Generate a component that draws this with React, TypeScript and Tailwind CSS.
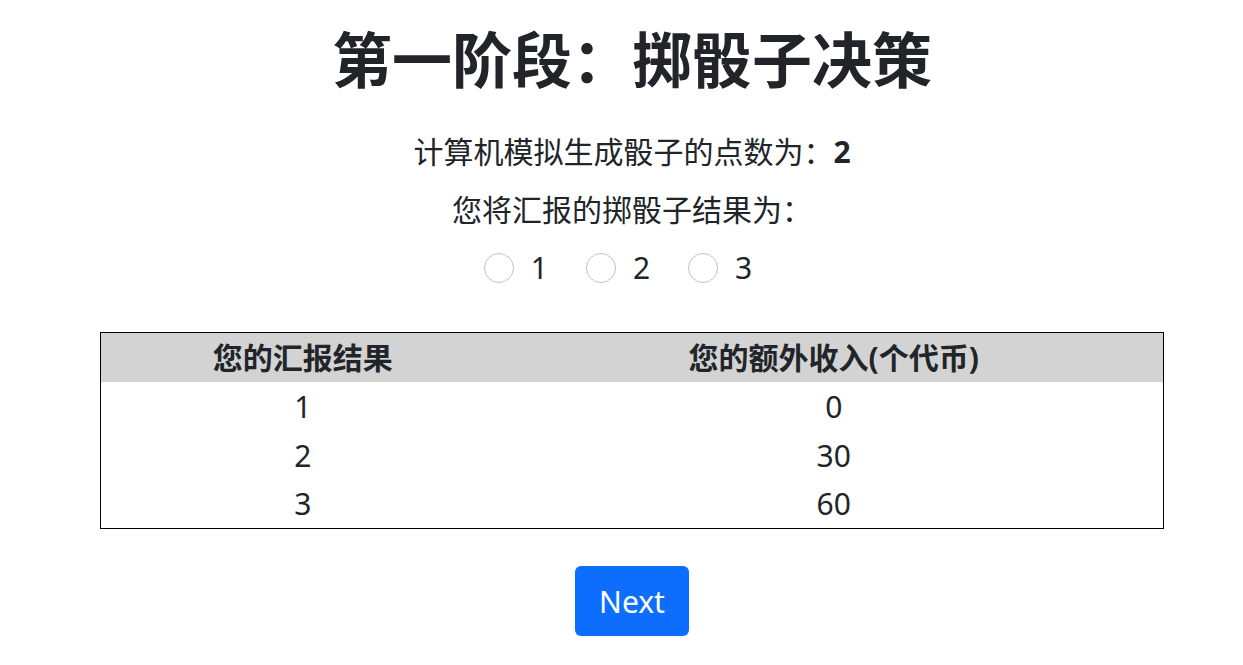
import React from "react";

export default function App() {
  const font = {
    fontFamily: '"Noto Sans", "Noto Sans CJK SC", sans-serif',
  };
  return (
    <div
      className="w-[1243px] h-[665px] bg-white text-[#212529] flex flex-col items-center pt-[24px] pl-[21px]"
      style={font}
    >
      <h1 className="text-[60px] leading-[72px] font-bold m-0">第一阶段：掷骰子决策</h1>
      <p className="text-[30px] leading-[42px] mt-[35px]">
        计算机模拟生成骰子的点数为：<span className="font-bold">2</span>
      </p>
      <p className="text-[30px] leading-[42px] mt-[16px]">您将汇报的掷骰子结果为：</p>
      <div className="flex items-center gap-[38px] mt-[16px] mr-[28px] h-[42px] text-[30px]">
        {["1", "2", "3"].map((v) => (
          <label key={v} className="flex items-center gap-[17px]">
            <span className="w-[30px] h-[30px] rounded-full border border-[#c4c4c4] bg-white inline-block" />
            <span className="leading-[42px]">{v}</span>
          </label>
        ))}
      </div>
      <table className="mt-[43px] w-[1064px] border border-black border-collapse text-[30px]">
        <thead>
          <tr className="bg-[#d3d3d3] h-[49px]">
            <th className="w-[404px] font-bold text-center">您的汇报结果</th>
            <th className="font-bold text-center">您的额外收入(个代币)</th>
          </tr>
        </thead>
        <tbody>
          {[
            ["1", "0"],
            ["2", "30"],
            ["3", "60"],
          ].map(([a, b]) => (
            <tr key={a} className="h-[49px]">
              <td className="text-center">{a}</td>
              <td className="text-center">{b}</td>
            </tr>
          ))}
        </tbody>
      </table>
      <button className="mt-[37px] w-[114px] h-[70px] bg-[#0d6efd] text-white text-[30px] rounded-[6px]">
        Next
      </button>
    </div>
  );
}
